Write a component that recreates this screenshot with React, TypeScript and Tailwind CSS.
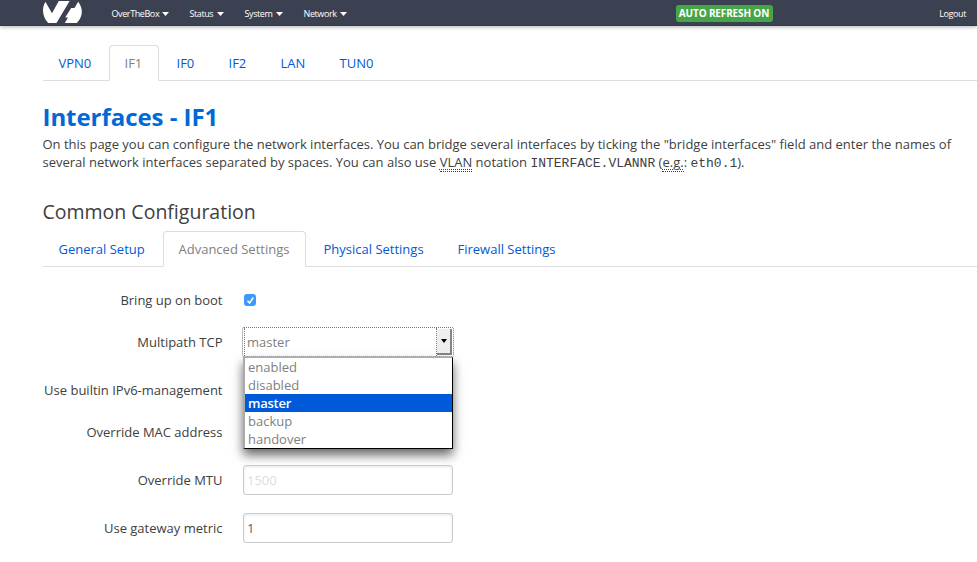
import type { ReactNode } from 'react';

const NAV = [
  { label: 'OverTheBox', box: 'w-[78px]', text: 'w-[48px]' },
  { label: 'Status', box: 'w-[55px]', text: 'w-[25px]' },
  { label: 'System', box: 'w-[59px]', text: 'w-[29px]' },
  { label: 'Network', box: 'w-[64px]', text: 'w-[34px]' },
];

function Logo() {
  return (
    <svg className="block h-[22px] w-[39px]" viewBox="0 0 39 22" fill="#fff">
      <path d="M2.400 .8 9 12.300 15.800 0H26.600L13.500 22H5.200C-.2 16.500-1.800 8 2.400 .8Z" />
      <path d="M35.200 .8C40.800 8 39.600 16.500 33.800 22H21.800L25 16.600H22.200L28.200 7H31.500Z" />
    </svg>
  );
}

function Tab({ label, width, active }: { label: string; width: string; active?: boolean }) {
  return (
    <div
      className={`${width} -mb-px h-9 shrink-0 whitespace-nowrap rounded-t border pl-[14.5px] pt-2 leading-[18px] ${
        active ? 'border-[#ddd] border-b-white bg-white text-[#808080]' : 'border-transparent text-[#0059d6]'
      }`}
    >
      {label}
    </div>
  );
}

function Abbr({ children }: { children: ReactNode }) {
  return (
    <abbr className="border-b border-dotted border-[#404040] underline decoration-dotted decoration-1 underline-offset-[2px]">
      {children}
    </abbr>
  );
}

function Code({ children }: { children: ReactNode }) {
  return (
    <code className="font-['Courier_New','Liberation_Mono',monospace] text-[13px] leading-none">{children}</code>
  );
}

function Field({ label, height, children }: { label: string; height: string; children?: ReactNode }) {
  return (
    <div className={`${height} flex items-start`}>
      <div className="w-[180px] whitespace-nowrap pr-[0.5px] pt-[6px] text-right leading-[18px]">{label}</div>
      <div className="ml-5">{children}</div>
    </div>
  );
}

function TextBox({ value, tone }: { value: string; tone: string }) {
  return (
    <div
      className={`${tone} h-[30px] w-[210px] rounded-[3px] border border-[#ccc] bg-white pl-[3px] pt-[5px] leading-[18px] shadow-[inset_0_1px_3px_rgba(0,0,0,0.1)]`}
    >
      {value}
    </div>
  );
}

function MultipathSelect() {
  const options = ['enabled', 'disabled', 'master', 'backup', 'handover'];
  return (
    <div className="relative h-[30px] w-[210px] text-[#808080]">
      <div className="-ml-px flex h-[30px] w-[212px] items-stretch rounded-[2px] border border-dotted border-[#777]">
        <div className="ml-px flex-1 border-l border-r border-dotted border-[#777] pl-[2px] pt-[5px] leading-[18px]">
          master
        </div>
        <div className="my-px mr-px flex w-[15px] items-center justify-center border-b-2 border-r-2 border-[#858585] bg-[#eee]">
          <svg className="h-[4px] w-[6px]" viewBox="0 0 6 4">
            <path d="M0 0H6L3 4Z" fill="#000" />
          </svg>
        </div>
      </div>
      <div className="absolute left-0 top-[30px] z-10 h-[92px] w-[210px] border-b border-l-2 border-r border-t border-b-black border-l-[#aaa] border-r-black border-t-[#aaa] bg-white shadow-[0_6px_10px_rgba(0,0,0,0.6)]">
        {options.map((option) => (
          <div
            key={option}
            className={`h-[18px] pl-[3px] leading-[18px] ${
              option === 'master' ? 'bg-[#0059d9] font-semibold tracking-[-0.25px] text-white' : ''
            }`}
          >
            {option}
          </div>
        ))}
      </div>
    </div>
  );
}

export default function App() {
  return (
    <div className="h-[562px] w-[977px] overflow-hidden bg-white font-['Open_Sans',sans-serif] text-[13px] leading-[18px] text-[#404040]">
      <header className="flex h-[26px] items-start border-b border-[#343947] bg-[#3c4151] pl-[43px] text-white shadow-[0_1px_4px_rgba(0,0,0,0.3)]">
        <div className="mt-px w-[68px]">
          <Logo />
        </div>
        <nav className="flex pt-[5px] text-[9px] leading-[18px]">
          {NAV.map((item) => (
            <div key={item.label} className={`${item.box} flex items-center whitespace-nowrap`}>
              <span className={`${item.text} pl-[0.5px] tracking-[-0.4px]`}>{item.label}</span>
              <svg className="ml-[3px] h-[4px] w-[7px]" viewBox="0 0 7 4">
                <path d="M0 0H7L3.500 4Z" fill="#fff" />
              </svg>
            </div>
          ))}
        </nav>
        <div className="ml-[309px] mt-[5px] h-[17px] w-[97px] whitespace-nowrap rounded-[3px] bg-[#46a546] pr-px text-center text-[10px] font-bold leading-[17px] tracking-[-0.15px]">
          AUTO REFRESH ON
        </div>
        <div className="ml-auto mr-[11px] pt-[5px] text-[9px] leading-[18px] tracking-[-0.4px]">Logout</div>
      </header>

      <main className="pl-[43px] pt-[19px]">
        <div className="flex h-9 border-b border-[#ddd]">
          <Tab label="VPN0" width="w-[66px]" />
          <Tab label="IF1" width="w-[50px]" active />
          <Tab label="IF0" width="ml-[2px] w-[50px]" />
          <Tab label="IF2" width="ml-[2px] w-[50px]" />
          <Tab label="LAN" width="ml-[2px] w-[57px]" />
          <Tab label="TUN0" width="ml-[2px] w-[70px]" />
        </div>

        <div className="-ml-[0.5px]">
          <h2 className="mt-[18px] h-9 whitespace-nowrap text-[24px] font-bold leading-[35px] tracking-[-0.05px] text-[#0069d6]">
            Interfaces - IF1
          </h2>
          <p className="h-[38px] whitespace-nowrap">
            On this page you can configure the network interfaces. You can bridge several interfaces by ticking the
            "bridge interfaces" field and enter the names of
            <br />
            several network interfaces separated by spaces. You can also use <Abbr>VLAN</Abbr> notation{' '}
            <Code>INTERFACE.VLANNR</Code> (<Abbr>e.g.</Abbr>: <Code>eth0.1</Code>).
          </p>

          <h3 className="mt-[22px] h-9 whitespace-nowrap text-[19.5px] leading-[34px]">Common Configuration</h3>
        </div>
        <div className="flex h-9 border-b border-[#ddd]">
          <Tab label="General Setup" width="w-[120px]" />
          <Tab label="Advanced Settings" width="w-[143px]" active />
          <Tab label="Physical Settings" width="ml-[2px] w-[134px]" />
          <Tab label="Firewall Settings" width="w-[130px]" />
        </div>

        <div className="pt-[18px]">
          <Field label="Bring up on boot" height="h-[42px]">
            <div className="ml-px mt-[9px] flex h-3 w-3 items-center justify-center rounded-[3px] bg-[#3b99fc]">
              <svg className="h-[9px] w-[9px]" viewBox="0 0 9 9" fill="none" stroke="#fff" strokeWidth="1.6">
                <path d="M1.500 4.800 3.600 7 7.300 1.500" />
              </svg>
            </div>
          </Field>
          <Field label="Multipath TCP" height="h-[48px]">
            <MultipathSelect />
          </Field>
          <Field label="Use builtin IPv6-management" height="h-[42px]" />
          <Field label="Override MAC address" height="h-[48px]" />
          <Field label="Override MTU" height="h-[48px]">
            <TextBox value="1500" tone="text-[#ddd]" />
          </Field>
          <Field label="Use gateway metric" height="h-[48px]">
            <TextBox value="1" tone="text-[#606060]" />
          </Field>
        </div>
      </main>
    </div>
  );
}
